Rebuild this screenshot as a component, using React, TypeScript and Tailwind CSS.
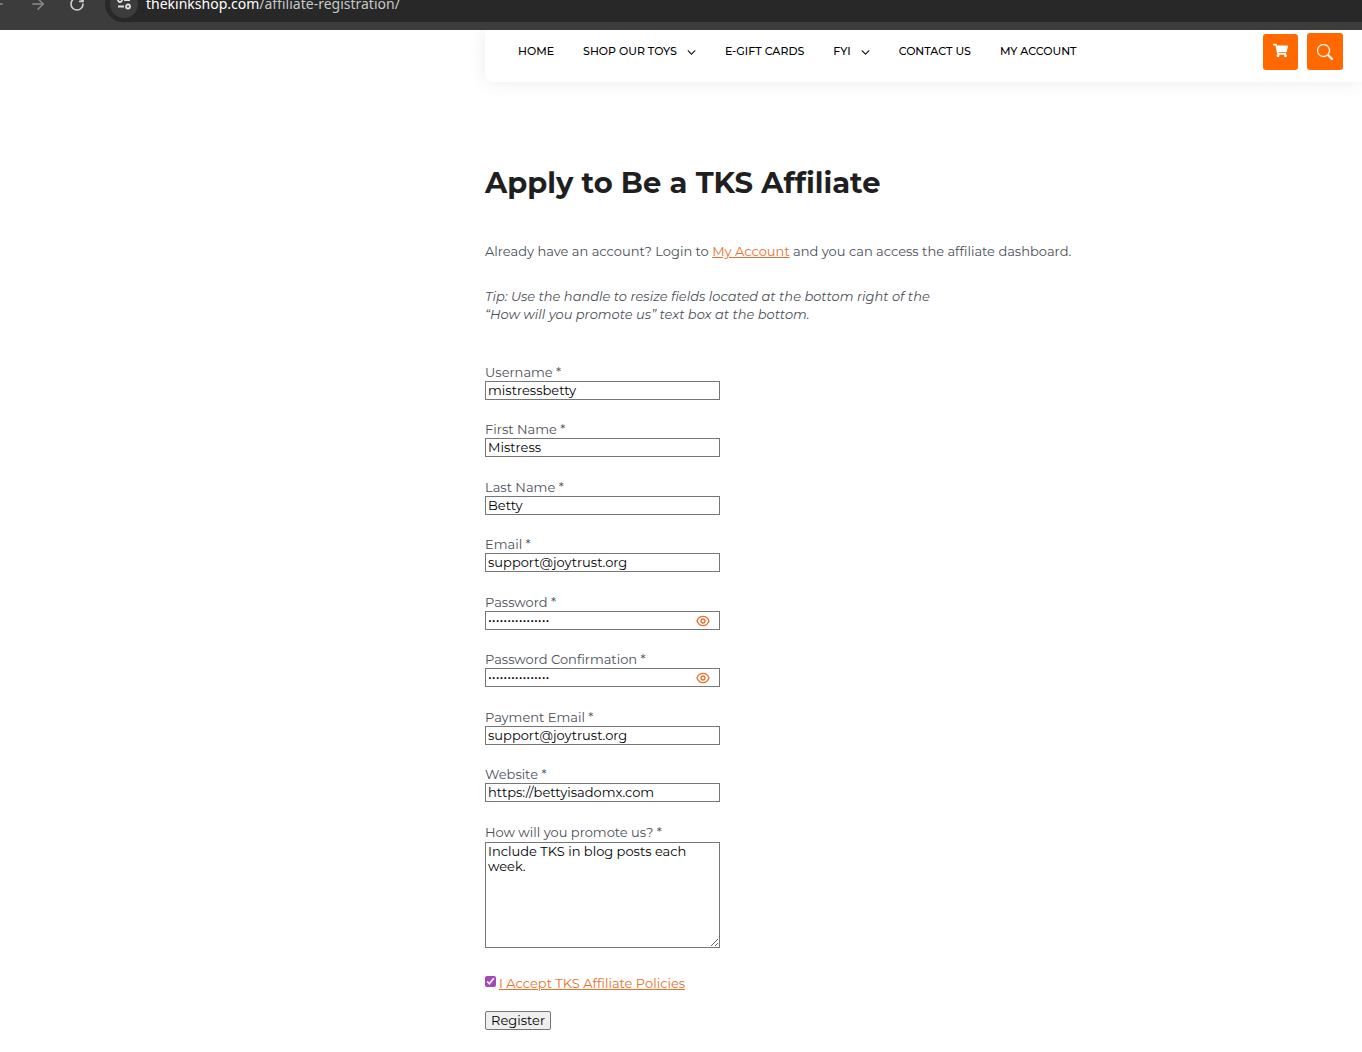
import { ArrowLeft, ArrowRight, RotateCw } from 'lucide-react';
import { BsChevronDown, BsSearch } from 'react-icons/bs';
import { FaShoppingCart } from 'react-icons/fa';

type FieldProps = {
  id: string;
  label: string;
  value: string;
  type?: string;
};

const navItems = [
  { label: 'HOME' },
  { label: 'SHOP OUR TOYS', menu: true },
  { label: 'E-GIFT CARDS' },
  { label: 'FYI', menu: true },
  { label: 'CONTACT US' },
  { label: 'MY ACCOUNT' },
];

const fieldGroups: FieldProps[][] = [
  [
    { id: 'username', label: 'Username', value: 'mistressbetty' },
    { id: 'first-name', label: 'First Name', value: 'Mistress' },
  ],
  [
    { id: 'last-name', label: 'Last Name', value: 'Betty' },
    { id: 'email', label: 'Email', value: 'support@joytrust.org', type: 'email' },
  ],
  [
    { id: 'password', label: 'Password', value: 'bettybettybetty1', type: 'password' },
    { id: 'password-confirm', label: 'Password Confirmation', value: 'bettybettybetty1', type: 'password' },
  ],
  [
    { id: 'payment-email', label: 'Payment Email', value: 'support@joytrust.org', type: 'email' },
    { id: 'website', label: 'Website', value: 'https://bettyisadomx.com', type: 'url' },
  ],
];

function EyeIcon() {
  return (
    <svg viewBox="0 0 14 12" className="h-3 w-3.5" fill="none" stroke="currentColor" strokeWidth="1.3">
      <path d="M1 6C2.2 2.8 4.3 1.4 7 1.4S11.8 2.8 13 6c-1.2 3.2-3.3 4.6-6 4.6S2.2 9.2 1 6Z" />
      <circle cx="7" cy="6" r="2" />
    </svg>
  );
}

function Field({ id, label, value, type = 'text' }: FieldProps) {
  return (
    <div>
      <label htmlFor={id} className="block h-[18px] leading-[18px]">
        {label} *
      </label>
      <div className="relative">
        <input
          id={id}
          type={type}
          defaultValue={value}
          className="block h-[19px] w-full border border-[#767676] bg-white px-0.5 text-black"
        />
        {type === 'password' && (
          <button type="button" aria-label="Show password" className="absolute inset-y-0 right-2.5 flex items-center text-[#e8702a]">
            <EyeIcon />
          </button>
        )}
      </div>
    </div>
  );
}

function BrowserBar() {
  return (
    <div className="relative z-10 h-[30px] overflow-hidden bg-[#3c3c3c]">
      <div className="flex h-[22px] items-end">
        <div className="flex h-9 w-[105px] shrink-0 items-center justify-between pr-5 text-[#8b8b8b]">
          <ArrowLeft className="-ml-3 size-[18px]" strokeWidth={1.8} />
          <ArrowRight className="size-[18px]" strokeWidth={1.8} />
          <RotateCw className="size-4 text-[#d0d0d0]" strokeWidth={2.4} />
        </div>
        <div className="flex h-9 grow items-center gap-2 rounded-l-full bg-[#282828] pl-[5px]">
          <span className="flex size-7 items-center justify-center rounded-full bg-[#3c3c3c] text-[#e0e0e0]">
            <svg viewBox="0 0 16 16" className="size-4" fill="none" stroke="currentColor" strokeWidth="1.8">
              <circle cx="4" cy="4" r="2" />
              <path d="M8 4h6M2 10.5h6" />
              <circle cx="12" cy="10.5" r="2" />
            </svg>
          </span>
          <span className="font-['Noto_Sans',sans-serif] text-[14px] leading-[18px] text-[#c7c7c7]">
            <span className="text-white">thekinkshop.com</span>/affiliate-registration/
          </span>
        </div>
      </div>
    </div>
  );
}

export default function App() {
  return (
    <div className="min-h-screen overflow-hidden bg-white font-[Montserrat,Inter,sans-serif] text-[13px] text-[#4b4f58]">
      <BrowserBar />
      <header className="ml-[485px] flex h-[52px] items-start justify-between rounded-bl-lg bg-white pr-[19px] pl-[33px] shadow-[0_0_20px_rgba(0,0,0,0.08)]">
        <nav className="flex h-[42px] items-center gap-[29px] text-[11px] font-medium text-black">
          {navItems.map((item) => (
            <a key={item.label} href="#" className="flex items-center gap-[10px] whitespace-nowrap">
              {item.label}
              {item.menu && <BsChevronDown className="mt-0.5 size-[9px]" strokeWidth={1} />}
            </a>
          ))}
        </nav>
        <div className="flex gap-[9px] pt-[3px]">
          <button type="button" aria-label="Cart" className="mt-px flex h-9 w-[35px] items-center justify-center rounded-[3px] bg-[#ff6900] pb-1 text-white">
            <FaShoppingCart className="size-[15px]" />
          </button>
          <button type="button" aria-label="Search" className="flex h-[37px] w-9 items-center justify-center rounded-[3px] bg-[#ff6900] text-white">
            <BsSearch className="size-4" strokeWidth={0.3} />
          </button>
        </div>
      </header>

      <main className="ml-[485px]">
        <h1 className="pt-[82px] text-[29px] leading-[38px] font-bold text-[#1f1f1f]">Apply to Be a TKS Affiliate</h1>
        <p className="mt-10 leading-[18px]">
          Already have an account? Login to{' '}
          <a href="#" className="text-[#e8702a] underline">
            My Account
          </a>{' '}
          and you can access the affiliate dashboard.
        </p>
        <p className="mt-[27px] leading-[18px] italic">
          Tip: Use the handle to resize fields located at the bottom right of the
          <br />
          “How will you promote us” text box at the bottom.
        </p>

        <form className="mt-10 w-[235px]">
          <div className="flex flex-col gap-[21px]">
            {fieldGroups.map((group) => (
              <div key={group[0].id} className="flex flex-col gap-5">
                {group.map((field) => (
                  <Field key={field.id} {...field} />
                ))}
              </div>
            ))}
            <div>
              <label htmlFor="promote" className="block h-[19px] leading-[18px]">
                How will you promote us? *
              </label>
              <textarea
                id="promote"
                defaultValue="Include TKS in blog posts each week."
                className="block h-[106px] w-full resize border border-[#767676] bg-white px-0.5 py-px leading-[15px] text-black"
              />
            </div>
          </div>
          <div className="mt-[26px] flex items-start gap-[3px] leading-[18px] whitespace-nowrap">
            <input id="policies" type="checkbox" defaultChecked className="mt-0.5 size-[11px] accent-[#a347ba]" />
            <label htmlFor="policies">
              <a href="#" className="text-[#e8702a] underline">
                I Accept TKS Affiliate Policies
              </a>
            </label>
          </div>
          <button type="submit" className="mt-[19px] flex h-[19px] items-center rounded-[2px] border border-[#767676] bg-[#efefef] px-[5px] text-black">
            Register
          </button>
        </form>
      </main>
    </div>
  );
}
